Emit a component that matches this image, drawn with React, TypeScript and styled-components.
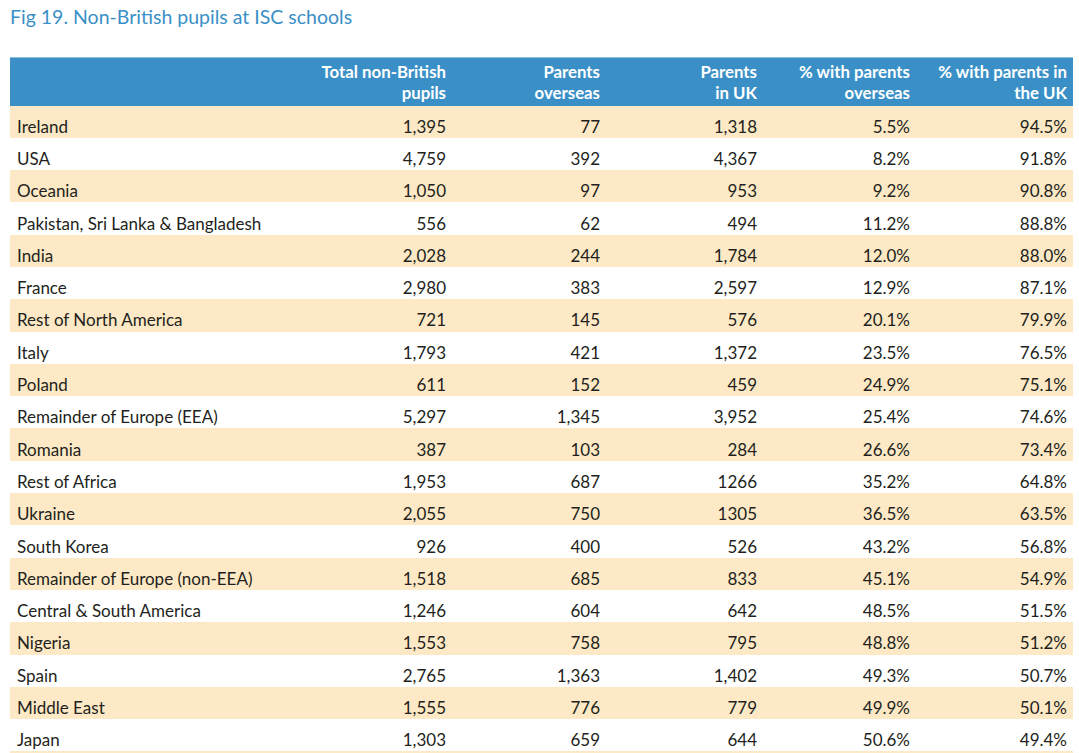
import * as React from 'react';
import styled, { createGlobalStyle } from 'styled-components';

const GlobalStyle = createGlobalStyle`
  html, body {
    margin: 0;
    padding: 0;
    background: #ffffff;
  }
  body {
    font-family: Lato, "Noto Sans", sans-serif;
    color: #231f20;
  }
`;

const Page = styled.div`
  padding: 5px 6px 0 10px;
`;

const Title = styled.h1`
  margin: 0;
  height: 52px;
  font-size: 19.5px;
  font-weight: 400;
  line-height: 24px;
  color: #3a90c6;
`;

const Table = styled.table`
  width: 1063px;
  border-collapse: collapse;
  table-layout: fixed;
`;

const HeadRow = styled.tr`
  height: 48px;
  background: #3a90c6;
  border-top: 1px solid #8cc0e0;
`;

const HeadCell = styled.th`
  padding: 0 6px 0 6px;
  text-align: right;
  vertical-align: middle;
  font-size: 16.8px;
  font-weight: 700;
  line-height: 21px;
  color: #ffffff;
`;

const Row = styled.tr<{ $shaded: boolean }>`
  height: 32.3px;
  background: ${(p) => (p.$shaded ? '#fde9c5' : '#ffffff')};
`;

const Cell = styled.td<{ $label?: boolean }>`
  padding: 10px 6px 0 7px;
  text-align: ${(p) => (p.$label ? 'left' : 'right')};
  vertical-align: middle;
  font-size: 17px;
  line-height: 20px;
  white-space: nowrap;
`;

const columns = [272, 170, 154, 157, 153, 157];

const headers = [
  ['', ''],
  ['Total non-British', 'pupils'],
  ['Parents', 'overseas'],
  ['Parents', 'in UK'],
  ['% with parents', 'overseas'],
  ['% with parents in', 'the UK'],
];

const rows: string[][] = [
  ['Ireland', '1,395', '77', '1,318', '5.5%', '94.5%'],
  ['USA', '4,759', '392', '4,367', '8.2%', '91.8%'],
  ['Oceania', '1,050', '97', '953', '9.2%', '90.8%'],
  ['Pakistan, Sri Lanka & Bangladesh', '556', '62', '494', '11.2%', '88.8%'],
  ['India', '2,028', '244', '1,784', '12.0%', '88.0%'],
  ['France', '2,980', '383', '2,597', '12.9%', '87.1%'],
  ['Rest of North America', '721', '145', '576', '20.1%', '79.9%'],
  ['Italy', '1,793', '421', '1,372', '23.5%', '76.5%'],
  ['Poland', '611', '152', '459', '24.9%', '75.1%'],
  ['Remainder of Europe (EEA)', '5,297', '1,345', '3,952', '25.4%', '74.6%'],
  ['Romania', '387', '103', '284', '26.6%', '73.4%'],
  ['Rest of Africa', '1,953', '687', '1266', '35.2%', '64.8%'],
  ['Ukraine', '2,055', '750', '1305', '36.5%', '63.5%'],
  ['South Korea', '926', '400', '526', '43.2%', '56.8%'],
  ['Remainder of Europe (non-EEA)', '1,518', '685', '833', '45.1%', '54.9%'],
  ['Central & South America', '1,246', '604', '642', '48.5%', '51.5%'],
  ['Nigeria', '1,553', '758', '795', '48.8%', '51.2%'],
  ['Spain', '2,765', '1,363', '1,402', '49.3%', '50.7%'],
  ['Middle East', '1,555', '776', '779', '49.9%', '50.1%'],
  ['Japan', '1,303', '659', '644', '50.6%', '49.4%'],
  ['', '', '', '', '', ''],
];

export default function App() {
  return (
    <Page>
      <GlobalStyle />
      <Title>Fig 19. Non-British pupils at ISC schools</Title>
      <Table>
        <colgroup>
          {columns.map((w, i) => (
            <col key={i} style={{ width: w }} />
          ))}
        </colgroup>
        <thead>
          <HeadRow>
            {headers.map(([a, b], i) => (
              <HeadCell key={i}>
                {a}
                {b && <br />}
                {b}
              </HeadCell>
            ))}
          </HeadRow>
        </thead>
        <tbody>
          {rows.map((r, i) => (
            <Row key={i} $shaded={i % 2 === 0}>
              {r.map((v, j) => (
                <Cell key={j} $label={j === 0}>
                  {v}
                </Cell>
              ))}
            </Row>
          ))}
        </tbody>
      </Table>
    </Page>
  );
}
